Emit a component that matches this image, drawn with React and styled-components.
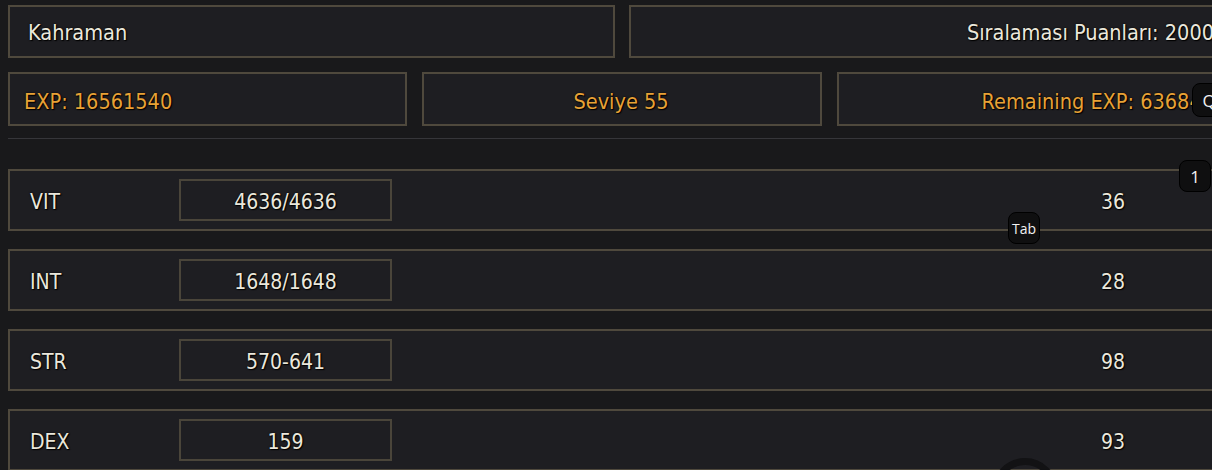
import React from "react";
import styled, { createGlobalStyle } from "styled-components";

const Global = createGlobalStyle`
  html, body {
    margin: 0;
    padding: 0;
    background: #19191b;
    overflow: hidden;
  }
  body {
    font-family: "DejaVu Sans Condensed", "DejaVu Sans", "Liberation Sans", sans-serif;
    font-stretch: condensed;
  }
`;

const Page = styled.div`
  position: relative;
  width: 1228px;
  height: 465px;
  padding: 5px 0 0 8px;
  box-sizing: content-box;
`;

const Grid = styled.div`
  display: grid;
  grid-template-columns: repeat(${(p) => p.$cols}, 1fr);
  column-gap: ${(p) => p.$gap}px;
  margin-bottom: ${(p) => p.$mb || 0}px;
`;

const InfoBox = styled.div`
  box-sizing: border-box;
  height: ${(p) => p.$h}px;
  display: flex;
  align-items: center;
  justify-content: ${(p) =>
    p.$align === "right" ? "flex-end" : p.$align === "center" ? "center" : "flex-start"};
  padding: ${(p) => p.$pt || 0}px 20px 0 ${(p) => p.$pl || 18}px;
  background: #1e1e22;
  border: 2px solid #4f493d;
  color: ${(p) => (p.$gold ? "#e8a236" : "#ebe8dc")};
  font-size: 21.5px;
  white-space: nowrap;
  overflow: hidden;
  text-shadow: 1px 1px 1px #000, 0 0 2px #000;
`;

const Divider = styled.div`
  height: 1px;
  background: #36363a;
  margin: 12px 0 30px;
`;

const StatList = styled.div`
  display: flex;
  flex-direction: column;
  gap: 18px;
`;

const StatRow = styled.div`
  box-sizing: border-box;
  height: 62px;
  display: flex;
  align-items: center;
  padding: 0 81px 0 20px;
  background: #1e1e22;
  border: 2px solid #4f493d;
  color: #ebe8dc;
  font-size: 21px;
  text-shadow: 1px 1px 1px #000, 0 0 2px #000;
`;

const StatLabel = styled.div`
  width: 149px;
  padding-top: 4px;
`;

const ValueBox = styled.div`
  box-sizing: border-box;
  width: 213px;
  height: 42px;
  display: flex;
  align-items: center;
  justify-content: center;
  background: #1e1e22;
  border: 2px solid #4a453a;
  padding-top: 4px;
`;

const Spacer = styled.div`
  flex: 1;
`;

const StatPoints = styled.div`
  width: 80px;
  text-align: center;
  padding-top: 4px;
`;

const KeyHint = styled.div`
  position: absolute;
  left: ${(p) => p.$x}px;
  top: ${(p) => p.$y}px;
  min-width: ${(p) => p.$s || 32}px;
  height: ${(p) => p.$s || 32}px;
  box-sizing: border-box;
  padding: 0 3px;
  display: flex;
  align-items: center;
  justify-content: center;
  background: #0f0f10;
  border: 1px solid #000;
  border-radius: 8px;
  color: #f2f2f2;
  font-family: "Open Sans", "Noto Sans", sans-serif;
  font-stretch: normal;
  font-size: ${(p) => p.$size || 14}px;
`;

const Ring = styled.div`
  position: absolute;
  left: 992px;
  top: 458px;
  width: 66px;
  height: 66px;
  box-sizing: border-box;
  border-radius: 50%;
  border: 7px solid #121214;
`;

const stats = [
  { name: "VIT", value: "4636/4636", points: 36 },
  { name: "INT", value: "1648/1648", points: 28 },
  { name: "STR", value: "570-641", points: 98 },
  { name: "DEX", value: "159", points: 93 },
];

export default function App() {
  return (
    <>
      <Global />
      <Page>
        <Grid $cols={2} $gap={14} $mb={14}>
          <InfoBox $h={53} $pt={2}>Kahraman</InfoBox>
          <InfoBox $h={53} $pt={2} $align="right">Sıralaması Puanları: 2000</InfoBox>
        </Grid>
        <Grid $cols={3} $gap={15}>
          <InfoBox $h={54} $pt={5} $pl={14} $gold>EXP: 16561540</InfoBox>
          <InfoBox $h={54} $pt={5} $gold $align="center">Seviye 55</InfoBox>
          <InfoBox $h={54} $pt={5} $gold $align="right">Remaining EXP: 636840</InfoBox>
        </Grid>
        <Divider />
        <StatList>
          {stats.map((s) => (
            <StatRow key={s.name}>
              <StatLabel>{s.name}</StatLabel>
              <ValueBox>{s.value}</ValueBox>
              <Spacer />
              <StatPoints>{s.points}</StatPoints>
            </StatRow>
          ))}
        </StatList>

        <KeyHint $x={1192} $y={83} $s={34} $size={17}>Q</KeyHint>
        <KeyHint $x={1179} $y={160} $size={17}>1</KeyHint>
        <KeyHint $x={1008} $y={212}>Tab</KeyHint>
        <Ring />
      </Page>
    </>
  );
}
